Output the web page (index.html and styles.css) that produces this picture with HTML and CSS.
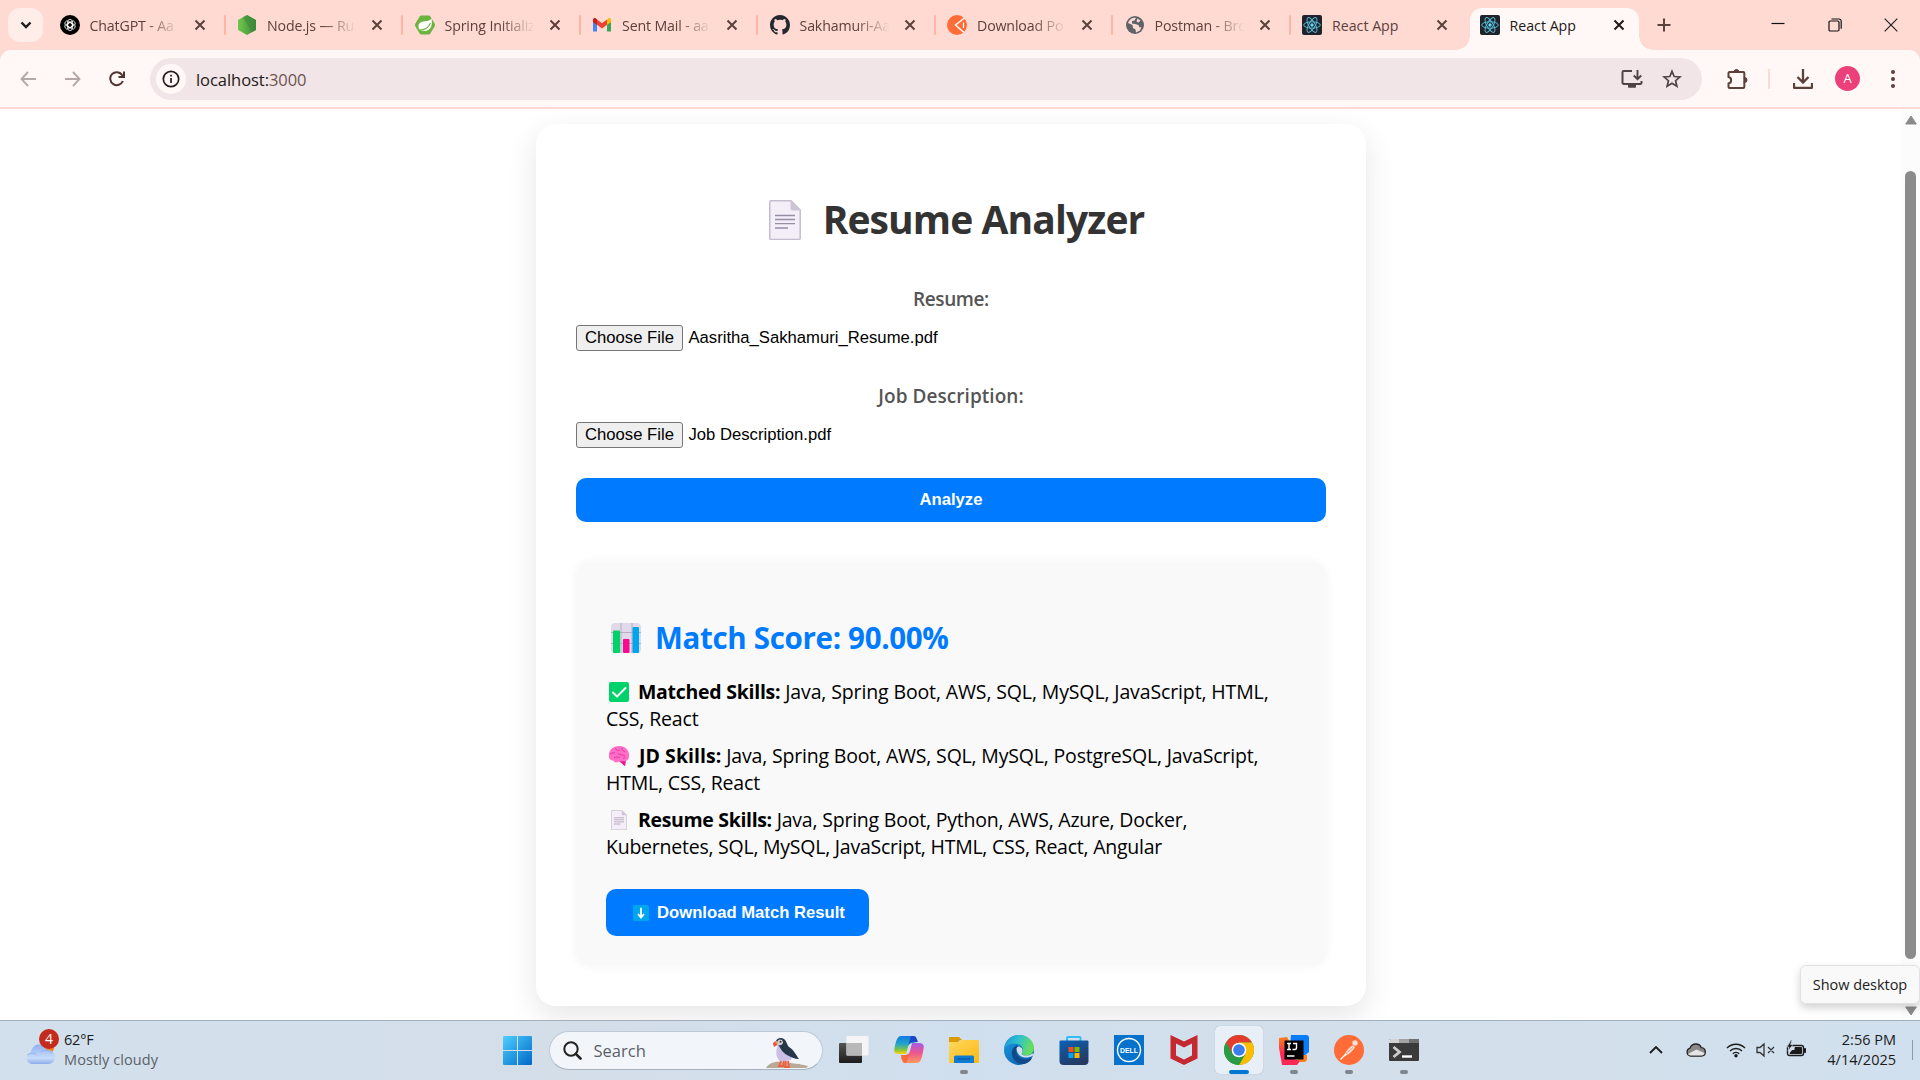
FILE: index.html
```html
<!DOCTYPE html>
<html lang="en">
<head>
<meta charset="utf-8">
<title>React App</title>
<link rel="stylesheet" href="styles.css">
</head>
<body>
<svg class="defs" width="0" height="0" aria-hidden="true">
  <defs>
    <symbol id="x" viewBox="0 0 12 12"><path d="M1.500 1.500l9 9M10.500 1.500l-9 9" stroke="currentColor" stroke-width="2" fill="none"/></symbol>
    <symbol id="react" viewBox="0 0 20 20"><rect width="20" height="20" rx="2" fill="#20232a"/><g fill="none" stroke="#53b9d6" stroke-width="1"><ellipse cx="10" cy="10" rx="8.3" ry="3.2"/><ellipse cx="10" cy="10" rx="8.3" ry="3.2" transform="rotate(60 10 10)"/><ellipse cx="10" cy="10" rx="8.3" ry="3.2" transform="rotate(120 10 10)"/></g><circle cx="10" cy="10" r="1.7" fill="#61dafb"/></symbol>
    <symbol id="page" viewBox="0 0 32 40"><path d="M2 .8h20l9.200 9.200v28a1.500 1.500 0 0 1-1.500 1.500H2A1.200 1.200 0 0 1 .8 38V2A1.200 1.200 0 0 1 2 .8z" fill="#f3eef8" stroke="#c5bdcf" stroke-width="1.500"/><path d="M21.500 1v7.500a2 2 0 0 0 2 2H31z" fill="#cdc4d6"/><path d="M6 15.500h20M6 19.500h20M6 23.700h20M6 28h13" stroke="#998da6" stroke-width="1.300"/></symbol>
    <linearGradient id="node" x2="1"><stop offset=".1" stop-color="#6cc24a"/><stop offset="1" stop-color="#3c873a"/></linearGradient>
    <linearGradient id="win" x2="1" y2="1"><stop stop-color="#4fd0ff"/><stop offset="1" stop-color="#0067c8"/></linearGradient>
    <linearGradient id="cloud" y2="1" x2="0"><stop stop-color="#8eb0f0"/><stop offset=".7" stop-color="#c9dcfa"/><stop offset="1" stop-color="#8cacec"/></linearGradient>
    <linearGradient id="dark" y2="1" x2="0"><stop stop-color="#555"/><stop offset="1" stop-color="#1c1c1c"/></linearGradient>
    <linearGradient id="copA" x2="0" y2="1"><stop stop-color="#1478e8"/><stop offset=".45" stop-color="#22a6c8"/><stop offset=".75" stop-color="#7cc34a"/><stop offset="1" stop-color="#ffd400"/></linearGradient>
    <linearGradient id="copB" x2="0" y2="1"><stop stop-color="#a55be8"/><stop offset=".5" stop-color="#ee5590"/><stop offset="1" stop-color="#ff9a5c"/></linearGradient>
    <linearGradient id="fold" x2="1" y2="1"><stop stop-color="#ffd75e"/><stop offset="1" stop-color="#fdb913"/></linearGradient>
    <linearGradient id="edgeA" x2="1" y2=".3"><stop stop-color="#1c8ee0"/><stop offset=".5" stop-color="#2ec1cf"/><stop offset="1" stop-color="#67de5b"/></linearGradient>
    <linearGradient id="edgeB" x2="1" y2="1"><stop stop-color="#1b9de2"/><stop offset="1" stop-color="#0c54a8"/></linearGradient>
    <linearGradient id="store" x2=".5" y2="1"><stop stop-color="#0a62b8"/><stop offset="1" stop-color="#243a63"/></linearGradient>
    <linearGradient id="ijA" x2="0" y2="1"><stop stop-color="#fc801d"/><stop offset=".6" stop-color="#fe2857"/></linearGradient>
  </defs>
</svg>

<div class="screen">
  <header class="tabstrip">
    <button class="tab-search"><svg width="12" height="8" viewBox="0 0 12 8"><path d="M1.500 1.500L6 6l4.500-4.500" fill="none" stroke="#1d1b1b" stroke-width="2.400"/></svg></button>
    <div class="tabs">
      <div class="tab"><svg class="fav" viewBox="0 0 20 20"><circle cx="10" cy="10" r="10" fill="#000"/><g fill="none" stroke="#fff" stroke-width=".8"><rect x="7.600" y="4.400" width="4.800" height="8.200" rx="2.400"/><rect x="7.600" y="4.400" width="4.800" height="8.200" rx="2.400" transform="rotate(60 10 10)"/><rect x="7.600" y="4.400" width="4.800" height="8.200" rx="2.400" transform="rotate(120 10 10)"/><rect x="7.600" y="4.400" width="4.800" height="8.200" rx="2.400" transform="rotate(180 10 10)"/><rect x="7.600" y="4.400" width="4.800" height="8.200" rx="2.400" transform="rotate(240 10 10)"/><rect x="7.600" y="4.400" width="4.800" height="8.200" rx="2.400" transform="rotate(300 10 10)"/></g></svg><span class="name">ChatGPT - Aa</span><svg class="close"><use href="#x"/></svg></div>
      <div class="tab"><svg class="fav" viewBox="0 0 20 20"><path d="M10 0l9 5v10l-9 5-9-5V5z" fill="url(#node)"/><path d="M10 0l9 5v10l-4 2.200L6 2.200z" fill="#3c873a" opacity=".55"/></svg><span class="name">Node.js — Ru</span><svg class="close"><use href="#x"/></svg></div>
      <div class="tab"><svg class="fav" viewBox="0 0 20 20"><path d="M5.500 1h9L20 10l-5.500 9h-9L0 10z" fill="#6db33f" stroke="#6db33f" stroke-linejoin="round"/><path d="M16.500 3.500c.9 5 .7 12.500-7.500 12.500-2 0-4.200-.8-5-2C2 8 6 6.500 10 6.300c3-.2 5-1 6.500-2.800z" fill="#fff"/><path d="M4.500 15c5 0 9-2 11-7" stroke="#6db33f" fill="none" stroke-width="1.100"/></svg><span class="name">Spring Initializ</span><svg class="close"><use href="#x"/></svg></div>
      <div class="tab"><svg class="fav" viewBox="0 0 20 20"><path d="M1 5v11.500h4V8z" fill="#4285f4"/><path d="M15 8v8.500h4V5z" fill="#34a853"/><path d="M15 5v5l4-3V4.500c0-1.500-2-2-3-1.200z" fill="#fbbc04"/><path d="M5 4.500l5 3.800 5-3.800v5.200l-5 3.800-5-3.800z" fill="#ea4335"/><path d="M1 4.500V7l4 3V4.200L4 3.400C3 2.600 1 3 1 4.500z" fill="#c5221f"/></svg><span class="name">Sent Mail - aa</span><svg class="close"><use href="#x"/></svg></div>
      <div class="tab"><svg class="fav" viewBox="0 0 16 16"><path fill="#24292f" d="M8 0C3.580 0 0 3.580 0 8c0 3.540 2.290 6.530 5.470 7.590.4.070.55-.17.55-.38 0-.19-.01-.82-.01-1.490-2.010.37-2.530-.49-2.690-.94-.09-.23-.48-.94-.82-1.130-.28-.15-.68-.52-.01-.53.63-.01 1.080.58 1.230.82.72 1.210 1.870.87 2.330.66.07-.52.28-.87.51-1.070-1.780-.2-3.640-.89-3.640-3.950 0-.87.31-1.590.82-2.150-.08-.2-.36-1.020.08-2.120 0 0 .67-.21 2.200.82A7.600 7.600 0 0 1 8 3.860c.68 0 1.360.09 2 .27 1.530-1.040 2.200-.82 2.200-.82.44 1.100.16 1.920.08 2.120.51.56.82 1.270.82 2.150 0 3.070-1.870 3.750-3.650 3.950.29.25.54.73.54 1.480 0 1.070-.01 1.930-.01 2.200 0 .21.15.46.55.38A8.010 8.010 0 0 0 16 8c0-4.420-3.580-8-8-8z"/></svg><span class="name">Sakhamuri-Aa</span><svg class="close"><use href="#x"/></svg></div>
      <div class="tab"><svg class="fav" viewBox="0 0 20 20"><circle cx="10" cy="10" r="10" fill="#ff6c37"/><path d="M17.500 3L8.500 10l8.500 7.500" fill="none" stroke="#fff" stroke-width="1.500"/><path d="M16.500 7.500v5.500" stroke="#fff" stroke-width="1.200"/></svg><span class="name">Download Po</span><svg class="close"><use href="#x"/></svg></div>
      <div class="tab"><svg class="fav" viewBox="0 0 20 20"><circle cx="10" cy="10" r="9" fill="#5f6368"/><path d="M3 8c2-5 5-5.500 8-5.300L9.500 5.500 7 6v2.500l3 .5 3.500 1 1 2.500 2-.5-1.500 3.500L11 17.500l-.5-3L8 13l-.5-3z" fill="#ffdad3"/><path d="M12.500 3.500l3 2-2 2-2-1z" fill="#ffdad3"/></svg><span class="name">Postman - Bro</span><svg class="close"><use href="#x"/></svg></div>
      <div class="tab"><svg class="fav"><use href="#react"/></svg><span class="name">React App</span><svg class="close"><use href="#x"/></svg></div>
      <div class="tab active"><svg class="fav"><use href="#react"/></svg><span class="name">React App</span><svg class="close"><use href="#x"/></svg></div>
    </div>
    <svg class="new-tab" viewBox="0 0 14 14"><path d="M7 .5v13M.5 7h13" stroke="#5b403b" stroke-width="2"/></svg>
    <div class="window-buttons">
      <svg width="14" height="14" viewBox="0 0 14 14"><path d="M.5 5.500h13" stroke="#111" stroke-width="1.200"/></svg>
      <svg width="14" height="14" viewBox="0 0 14 14"><rect x="1" y="3" width="10" height="10" rx="1.200" fill="none" stroke="#111" stroke-width="1.200"/><path d="M3.500 1h7.500a2.200 2.200 0 0 1 2.200 2.200v7.500" fill="none" stroke="#111" stroke-width="1.200"/></svg>
      <svg width="14" height="14" viewBox="0 0 14 14"><path d="M.7.700l12.600 12.600M13.300.700L.7 13.300" stroke="#222" stroke-width="1.200"/></svg>
    </div>
  </header>

  <div class="toolbar-wrap">
    <div class="toolbar">
      <div class="nav">
        <svg width="16" height="16" viewBox="0 0 16 16"><path d="M8 1L1.500 8 8 15M1.500 8H16" fill="none" stroke="#b5a9a7" stroke-width="1.900"/></svg>
        <svg width="16" height="16" viewBox="0 0 16 16"><path d="M8 1l6.500 7L8 15M14.500 8H0" fill="none" stroke="#b5a9a7" stroke-width="1.900"/></svg>
        <svg width="16" height="16" viewBox="0 0 16 16"><path d="M13.800 10A6.500 6.500 0 1 1 13 3.800L14.500 5.500M15 .5v5.500H9.500" fill="none" stroke="#4e3430" stroke-width="2"/></svg>
      </div>
      <div class="omnibox">
        <span class="site-info"><svg width="18" height="18" viewBox="0 0 18 18"><circle cx="9" cy="9" r="7.700" fill="none" stroke="#241c1c" stroke-width="1.700"/><path d="M9 8v5M9 4.800v1.700" stroke="#241c1c" stroke-width="1.700"/></svg></span>
        <span class="url">localhost:<i>3000</i></span>
        <span class="omni-actions">
          <svg width="22" height="20" viewBox="0 0 22 20"><path d="M11 2H2.700A1.200 1.200 0 0 0 1.500 3.200v10.600A1.200 1.200 0 0 0 2.700 15h16.600a1.200 1.200 0 0 0 1.200-1.200V12" fill="none" stroke="#4e4444" stroke-width="2"/><path d="M7 15.500h8V18a.8.800 0 0 1-.8.800H7.800A.8.800 0 0 1 7 18z" fill="#4e4444"/><path d="M16.500 1v9M12.800 6.500l3.700 3.700 3.700-3.700" fill="none" stroke="#4e4444" stroke-width="1.900"/></svg>
          <svg width="20" height="20" viewBox="0 0 20 20"><path d="M10 2.300l2.200 5.200 5.700.5-4.300 3.700 1.300 5.600-4.900-3-4.900 3 1.300-5.600L2.100 8l5.700-.5z" fill="none" stroke="#4e4444" stroke-width="1.700"/></svg>
        </span>
      </div>
      <div class="actions">
        <svg class="ext" width="22" height="22" viewBox="0 0 22 22"><path d="M3.500 4h13.800a1 1 0 0 1 1 1v14a1 1 0 0 1-1 1H3.500a1 1 0 0 1-1-1v-3.500c3.500-.5 3.500-6 0-6.500V5a1 1 0 0 1 1-1z" fill="none" stroke="#5b403b" stroke-width="2"/><path d="M8 4a2.500 2.500 0 0 1 5 0zM18.500 9.500a2.500 2.500 0 0 1 0 5z" fill="#5b403b" stroke="#5b403b"/></svg>
        <i class="divider"></i>
        <svg class="dl" width="20" height="20" viewBox="0 0 20 20"><path d="M10 0v13M4.500 8l5.500 5.500L15.500 8M1 14v4a1 1 0 0 0 1 1h16a1 1 0 0 0 1-1v-4" fill="none" stroke="#5b403b" stroke-width="2.300"/></svg>
        <span class="avatar">A</span>
        <svg width="4" height="18" viewBox="0 0 4 18" fill="#5b403b"><circle cx="2" cy="2" r="2"/><circle cx="2" cy="9" r="2"/><circle cx="2" cy="16" r="2"/></svg>
      </div>
    </div>
  </div>

  <main class="viewport">
    <section class="card">
      <h1><svg class="doc"><use href="#page"/></svg>Resume Analyzer</h1>
      <label>Resume:</label>
      <div class="file"><button>Choose File</button><span>Aasritha_Sakhamuri_Resume.pdf</span></div>
      <label class="job">Job Description:</label>
      <div class="file"><button>Choose File</button><span>Job Description.pdf</span></div>
      <button class="analyze">Analyze</button>
      <div class="result">
        <h2><svg viewBox="0 0 30 30"><rect width="30" height="30" rx="4" fill="#e1d8ea"/><path d="M10 0v30M21 0v30M0 9.500h30M0 20.500h30" stroke="#aea3ba" stroke-width=".8"/><rect x="2" y="7.500" width="7" height="22.500" rx="1" fill="#00d26a"/><rect x="12" y="16" width="6.500" height="14" rx="1" fill="#f70a8d"/><rect x="21.500" y="4" width="6.500" height="26" rx="1" fill="#00a6ed"/></svg>Match Score: 90.00%</h2>
        <p class="r1"><svg viewBox="0 0 20 20"><rect width="20" height="20" rx="2" fill="#00d26a"/><path d="M4 10.500l4 4L16.500 6" fill="none" stroke="#fff" stroke-width="1.900" stroke-linecap="round" stroke-linejoin="round"/></svg><b>Matched Skills:</b> Java, Spring Boot, AWS, SQL, MySQL, JavaScript, HTML,<br>CSS, React</p>
        <p class="r2"><svg class="brain" viewBox="0 0 22 20"><path d="M11 15l7-1-.8 6c-1.500 0-2-2-4-3z" fill="#e8188f"/><path d="M1 9C1 3 6 0 11.500 0S20 4 20.500 6c1.500 4 .5 8-2.500 9-3 1-6-.5-7 .5-2.500 1.500-5 1-5.500-1C2.500 14.500.5 13 1 9z" fill="#ff6dc6"/><path d="M2 8c2-1.500 3-1 5-1M8 2c-1 2 2 3 4 2M14 2c0 3 2 3 3 4M6 12c2-2 4 0 6-1M10 7c1 3 5 1 7 3M15 12c1 .5 2 0 3-1" fill="none" stroke="#e82b9b" stroke-width=".9"/></svg><b>JD Skills:</b> Java, Spring Boot, AWS, SQL, MySQL, PostgreSQL, JavaScript,<br>HTML, CSS, React</p>
        <p class="r3"><svg class="mini"><use href="#page"/></svg><b>Resume Skills:</b> Java, Spring Boot, Python, AWS, Azure, Docker,<br><span class="r4">Kubernetes, SQL, MySQL, JavaScript, HTML, CSS, React, Angular</span></p>
        <button class="download"><svg width="16" height="16" viewBox="0 0 16 16"><rect width="16" height="16" rx="1.500" fill="#00a6ed"/><path d="M8 2.800v9M5 9l3 3.500L11 9" fill="none" stroke="#fff" stroke-width="1.800"/></svg>Download Match Result</button>
      </div>
    </section>
    <aside class="scrollbar">
      <svg width="12" height="10" viewBox="0 0 12 10"><path d="M6 1l5.300 8H.7z" fill="#8b8b8b" stroke="#8b8b8b" stroke-linejoin="round"/></svg>
      <i class="thumb"></i>
      <svg width="12" height="10" viewBox="0 0 12 10"><path d="M6 9L.7 1h10.600z" fill="#8b8b8b" stroke="#8b8b8b" stroke-linejoin="round"/></svg>
    </aside>
    <div class="tooltip">Show desktop</div>
  </main>

  <footer class="taskbar">
    <div class="weather">
      <div class="weather-icon"><svg width="31" height="22" viewBox="0 0 31 22"><circle cx="23" cy="5" r="6" fill="#f58220"/><path d="M6.500 21a6 6 0 0 1-.8-11.500C7 4 10 1.500 14 1.500c3.500 0 6 2 7 5 5 0 9 3 9 7.500 0 4-3 7-7 7z" fill="url(#cloud)"/><path d="M2 12c4-3 8-2 10 .5M16 9c3-3 8-2 11 1" fill="none" stroke="#779bea" stroke-width=".8" opacity=".7"/></svg><span class="badge">4</span></div>
      <div class="weather-text"><b>62°F</b><span>Mostly cloudy</span></div>
    </div>
    <div class="center">
      <svg class="start" width="29" height="29" viewBox="0 0 29 29"><path d="M1 0h13v14H0V1a1 1 0 0 1 1-1zM15 0h13a1 1 0 0 1 1 1v13H15zM0 15h14v14H1a1 1 0 0 1-1-1zM15 15h14v13a1 1 0 0 1-1 1H15z" fill="url(#win)"/></svg>
      <div class="search">
        <svg width="19" height="19" viewBox="0 0 19 19"><circle cx="8" cy="8" r="6.700" fill="none" stroke="#222" stroke-width="2"/><path d="M12.800 12.800l4.700 4.700" stroke="#222" stroke-width="2.600" stroke-linecap="round"/></svg>
        <span>Search</span>
        <svg class="puffin" width="42" height="31" viewBox="0 0 42 31"><path d="M0 31c2-4 8-7 16-6 9 1 19 2 26 4-1 2-2 2-4 2z" fill="#b9aa98"/><path d="M12 8l6-6 4 6 5 7-2 8-10 2c-5-4-6-10-3-17z" fill="#cbbfe6"/><path d="M10 4c1-3 5-4 8-2 3 2 3 7 5 8 5 3 7 8 10 12-5 0-8-2-12-4-5-3-6-6-8-9z" fill="#27374a"/><path d="M11 6c0-4 5-5 6-1 .5 3-5 5-6 1z" fill="#d5d0dc"/><circle cx="14.500" cy="4.800" r="1" fill="#333"/><path d="M7 7c0-2 2-3 4-3l.5 4L8 10z" fill="#ef5350"/><path d="M9 4.800l2-.8.500 4z" fill="#f5a623"/><path d="M15 24l-2 5h4l1-5M20 24l-1 6h4l-1-6" fill="none" stroke="#f0603f" stroke-width="1.800"/></svg>
      </div>
      <div class="apps">
        <div class="app"><svg viewBox="0 0 30 30"><rect y="8" width="23" height="20" rx="1" fill="url(#dark)"/><rect x="7.500" y="1" width="22" height="19.500" rx="1" fill="#f5f5f5"/><rect x="7.500" y="8" width="15.500" height="12.500" fill="#b8b8b8"/></svg></div>
        <div class="app"><svg viewBox="0 0 30 30"><path d="M7 1h12c2 0 3 2 4 6l-4 1c-3 0-4 1-5 4l-2 7H5c-4 0-5.500-2-4.500-6C2 7 3 1 7 1z" fill="url(#copA)"/><path d="M17 1h3c2 0 3 3 4 6h-5c-2 0-4 1-5 4z" fill="#1b48c9"/><path d="M23 28H11c-2 0-3-2-4-6l4-2c3 0 4-1 5-4l2-8h7c4 0 5.500 2 4.500 6C28 22 27 28 23 28z" fill="url(#copB)"/><path d="M7 20h5c2 0 3-1 4-4l-3 11c-3 3-5-1-6-7z" fill="#fb6a3b"/></svg></div>
        <div class="app run"><svg viewBox="0 0 30 30"><path d="M1 2h9l3 3h-2l-2 2H0V3a1 1 0 0 1 1-1z" fill="#dc9a05"/><path d="M0 7h10l2-2h17a1 1 0 0 1 1 1v21a1 1 0 0 1-1 1H1a1 1 0 0 1-1-1z" fill="url(#fold)"/><path d="M5 28v-6a1.500 1.500 0 0 1 1.500-1.500h17A1.500 1.500 0 0 1 25 22v6z" fill="#0f7cd4"/><path d="M8.500 24h13" stroke="#064d91"/></svg></div>
        <div class="app"><svg viewBox="0 0 30 30"><circle cx="15" cy="15" r="15" fill="url(#edgeB)"/><path d="M0 14C1 5 7 0 15 0c9 0 15 6 15 13 0 5-4 7.500-8 7.500-3 0-5-1-4-2.500 2-3 1-8-5-9-6-1-11 1-13 5z" fill="url(#edgeA)"/><path d="M13 10c-4 2-6 6-5 10 1 5 5 9 10 9 4 0 8-2 10-6-6 3-13 1-15-4-1-2-1-4 1-6.500z" fill="#114a8b"/><path d="M12.500 14c0-2 2-3 3.500-2 3 1 3 4 2 6-1 1 0 2.500 4 2.500 2 0 4-.5 5.500-1.500 2-1 2.500-.5 1.500 1.500-6 4-15.500 2.500-16.500-6.500z" fill="#d3dfec"/></svg></div>
        <div class="app"><svg viewBox="0 0 30 30"><path d="M8 8V3a1 1 0 0 1 1-1h11.500a1 1 0 0 1 1 1v5" fill="none" stroke="#31bdf3" stroke-width="2"/><path d="M.5 6.500a1 1 0 0 1 1-1h27a1 1 0 0 1 1 1V26a4 4 0 0 1-4 4h-21a4 4 0 0 1-4-4z" fill="url(#store)"/><path d="M9.500 12h5v5h-5z" fill="#f25022"/><path d="M15.500 12h5v5h-5z" fill="#7fba00"/><path d="M9.500 18h5v5h-5z" fill="#00a4ef"/><path d="M15.500 18h5v5h-5z" fill="#ffb900"/></svg></div>
        <div class="app"><svg viewBox="0 0 30 30"><path d="M0 0h30v30H0z" fill="#0672cb"/><circle cx="15" cy="15" r="11.500" fill="none" stroke="#fff" stroke-width="1.400"/><text x="15" y="17.800" text-anchor="middle" textLength="18" lengthAdjust="spacingAndGlyphs" class="dell">DELL</text></svg></div>
        <div class="app"><svg viewBox="0 0 30 30"><path d="M1.500 0L15 6.500 28.500 0v23.500L15 30 1.500 23.500zM7 8.500v12L15 24.500l8-4v-12L15 12.500z" fill="#c3292f" fill-rule="evenodd"/></svg></div>
        <div class="app current"><svg viewBox="0 0 30 30"><circle cx="15" cy="15" r="15" fill="#34a853"/><path d="M15 0a15 15 0 0 1 13 7.500H15L8.500 18.800 2 7.500A15 15 0 0 1 15 0z" fill="#e33b2e"/><path d="M15 7.500h13A15 15 0 0 1 15 30l6.500-11.300z" fill="#fbbc04"/><path d="M2 7.500l6.500 11.300L15 22.500l6-3L15 30A15 15 0 0 1 2 7.500z" fill="#2b9a47"/><circle cx="15" cy="15" r="7.300" fill="#fff"/><circle cx="15" cy="15" r="5.800" fill="#3b7ded"/></svg></div>
        <div class="app run"><svg viewBox="0 0 30 30"><path d="M12 0h15a3 3 0 0 1 3 3v14l-6 5H10z" fill="#087cfa"/><path d="M20 20h8v5l-2 2h-8z" fill="#fc801d"/><path d="M0 3l8-1 4 7v14l9 3-3 4H3L0 13z" fill="url(#ijA)"/><path d="M5.500 5.500h19v19h-19z" fill="#000"/><path d="M8 8.500h4M10 8.500v6M8 14.500h4M14 8.500h3.500V13q0 1.500-1.700 1.500H13.500" fill="none" stroke="#fff" stroke-width="1.400"/><path d="M8 21h7.500" stroke="#fff" stroke-width="1.500"/></svg></div>
        <div class="app run"><svg viewBox="0 0 30 30"><circle cx="15" cy="15" r="15" fill="#ff6c37"/><circle cx="21" cy="8" r="2.700" fill="#ffe0d4"/><path d="M18.500 10.500c-3 1.500-6 5-7.500 8l-1.500 3 3.500-1.500c3-2 6.500-4.500 8-8z" fill="#ffe0d4"/><path d="M12 19l-5.500 5.500" fill="none" stroke="#fff" stroke-width="1.300"/><path d="M12 18.500l7-6" fill="none" stroke="#ff6c37" stroke-width=".7"/></svg></div>
        <div class="app run"><svg viewBox="0 0 30 30"><path d="M0 5a1 1 0 0 1 1-1h28a1 1 0 0 1 1 1v20a1 1 0 0 1-1 1H1a1 1 0 0 1-1-1z" fill="#3b3b3b"/><path d="M0 8V5a1 1 0 0 1 1-1h9v4z" fill="#d2d2d2"/><path d="M10 4h10v4H10z" fill="#a3a3a3"/><path d="M20 4h9a1 1 0 0 1 1 1v3H20z" fill="#707070"/><path d="M4.500 12l6 5-6 5" fill="none" stroke="#ccc" stroke-width="2.800"/><path d="M13 21.500h10" stroke="#fff" stroke-width="2.400"/></svg></div>
      </div>
    </div>
    <div class="tray">
      <svg width="14" height="8" viewBox="0 0 14 8"><path d="M1 7l6-6 6 6" fill="none" stroke="#1b1b1b" stroke-width="1.800"/></svg>
      <svg class="onedrive" width="20" height="14" viewBox="0 0 20 14"><path d="M4.500 13A4 4 0 0 1 4 5.200C5 2.500 7 1 9.800 1c3 0 4.700 1.500 5.500 3.700C18 5 19.300 7 19.300 9c0 2.500-1.800 4-4 4z" fill="#8a8a8a" stroke="#222" stroke-width="1.300"/><path d="M2 11l8.500-4.500 8 3.500c0 1.500-1.500 2.400-3 2.400H4.500c-1.300 0-2.200-.6-2.500-1.400z" fill="#e5e5e5"/></svg>
      <svg class="wifi" width="20" height="16" viewBox="0 0 20 16"><path d="M1 6a12.700 12.700 0 0 1 18 0M4 9a8.500 8.500 0 0 1 12 0M6.800 11.700a4.500 4.500 0 0 1 6.400 0" fill="none" stroke="#1b1b1b" stroke-width="1.400"/><circle cx="10" cy="13.800" r="1.700" fill="#1b1b1b"/></svg>
      <svg class="mute" width="19" height="16" viewBox="0 0 19 16"><path d="M1 5.500h3L8 2v12l-4-3.500H1zM12 5l6 6M18 5l-6 6" fill="none" stroke="#333" stroke-width="1.300"/></svg>
      <svg class="battery" width="20" height="18" viewBox="0 0 20 18"><rect x="1.500" y="5.500" width="16" height="10" rx="2" fill="none" stroke="#1b1b1b" stroke-width="1.400"/><path d="M9 7.500h6.500v6H4l2-3h3zM18.500 8.500h1v4h-1z" fill="#1b1b1b" stroke="#1b1b1b"/><path d="M5 0L1 7h2l-1 4 5-6.500H4.500L6 0z" fill="#1b1b1b" stroke="#d3dfec" stroke-width=".6"/></svg>
      <div class="clock"><span>2:56 PM</span><span>4/14/2025</span></div>
      <i class="show-desktop"></i>
    </div>
  </footer>
</div>
</body>
</html>
```
FILE: styles.css
```css
* { box-sizing: border-box; }
body { margin: 0; background: #fff; font-family: "Open Sans", "Noto Sans", sans-serif; }
button { font-family: "Liberation Sans", Arial, sans-serif; margin: 0; padding: 0; border: 0; }
svg { display: block; flex: none; }
.defs { position: absolute; }
.screen { width: 1920px; height: 1080px; overflow: hidden; display: flex; flex-direction: column; }

/* tab strip */
.tabstrip { height: 50px; background: #ffdad3; display: flex; align-items: flex-start; flex: none; padding-left: 8px; }
.tab-search { width: 35px; height: 34px; margin-top: 8px; border-radius: 12px; background: #ffedea; display: grid; place-items: center; }
.tabs { display: flex; margin-left: 4px; height: 50px; }
.tab { width: 177.500px; height: 50px; flex: none; display: flex; align-items: center; padding-left: 12.500px; position: relative; color: #5b403b; }
.tab + .tab:not(.active)::before { content: ""; width: 2px; height: 20px; border-radius: 1px; background: #ffb4a6; position: absolute; left: -1px; top: 15px; }
.fav { width: 20px; height: 20px; }
.name { font-size: 14.200px; letter-spacing: -.15px; line-height: 20px; width: 92px; margin-left: 10px; padding-top: 1px; white-space: nowrap; -webkit-mask-image: linear-gradient(90deg, #000 60%, transparent 97%); mask-image: linear-gradient(90deg, #000 60%, transparent 97%); }
.tab:nth-last-child(-n+2) .name { -webkit-mask-image: none; mask-image: none; letter-spacing: 0; }
.close { width: 12px; height: 12px; margin-left: 12px; }
.tab.active { width: 169px; height: 42px; margin: 8px 0 0 2.500px; padding-left: 10px; padding-bottom: 8px; border-radius: 12px 12px 0 0; background: #fff8f6; color: #231918; }
.tab.active .close { margin-left: 11px; }
.tab.active::before, .tab.active::after { content: ""; position: absolute; bottom: 0; width: 14px; height: 14px; }
.tab.active::before { left: -14px; background: radial-gradient(circle at 0 0, transparent 13.500px, #fff8f6 14px); }
.tab.active::after { right: -14px; background: radial-gradient(circle at 100% 0, transparent 13.500px, #fff8f6 14px); }
.new-tab { width: 14px; height: 14px; margin: 18px 0 0 18px; }
.window-buttons { display: flex; gap: 42.500px; margin: 17.500px 22px 0 auto; }

/* toolbar */
.toolbar-wrap { background: #ffdad3; height: 59px; flex: none; padding-bottom: 2px; }
.toolbar { height: 57px; background: #fff8f6; border-radius: 11px 11px 0 0; display: flex; align-items: center; padding-left: 20px; }
.nav { display: flex; gap: 28.500px; width: 130px; }
.omnibox { width: 1552px; height: 42px; border-radius: 21px; background: #f2e5e7; display: flex; align-items: center; padding: 0 20px 0 6px; margin-top: 1px; }
.site-info { width: 30px; height: 30px; border-radius: 50%; background: #fff8f6; display: grid; place-items: center; }
.url { font-size: 16.500px; letter-spacing: -.05px; margin-left: 10px; color: #231918; }
.url i { font-style: normal; color: #6b5450; }
.omni-actions { display: flex; gap: 19px; margin-left: auto; align-items: center; }
.actions { display: flex; align-items: center; margin-left: 23.500px; flex: 1; }
.divider { width: 2px; height: 20px; background: #ffdad3; margin-left: 20px; }
.dl { margin-left: 23px; }
.avatar { width: 25px; height: 25px; border-radius: 50%; background: #ec407a; color: #fff; font-size: 13px; line-height: 25px; text-align: center; margin: 0 31px 0 22.500px; }

/* page */
.viewport { flex: 1; position: relative; display: flex; justify-content: flex-end; align-items: flex-start; background: #fff; min-height: 0; overflow: hidden; }
.card { width: 830px; height: 882px; margin: 15px 535px 0 0; padding: 68px 40px 0; border-radius: 20px; background: #fff; box-shadow: 0 10px 30px rgba(0, 0, 0, .1); display: flex; flex-direction: column; }
h1 { margin: 0; font-size: 39px; line-height: 54px; letter-spacing: -.9px; color: #333; display: flex; justify-content: center; }
.doc { width: 32px; height: 40px; margin: 8px 22px 0 11px; }
label { font-size: 19px; font-weight: 600; line-height: 26px; color: #555; text-align: center; letter-spacing: -.4px; margin: 40px 0 13px; }
label.job { letter-spacing: .05px; margin-top: 32px; }
.file { display: flex; height: 26px; align-items: center; font: 16.670px/19px "Liberation Sans", Arial, sans-serif; color: #000; gap: 5.500px; }
.file button { width: 107px; height: 26px; border: 1px solid #767676; border-radius: 3px; background: #efefef; font-size: 16.670px; line-height: 22px; }
.file span { margin-top: -1px; }
.analyze { margin-top: 30px; height: 44px; border-radius: 10px; background: #007bff; color: #fff; font-size: 16.670px; font-weight: 700; flex: none; }
.result { margin-top: 40px; height: 404px; padding: 56px 30px 0; border-radius: 15px; background: #f9f9f9; box-shadow: 0 0 10px rgba(0, 0, 0, .05); color: #000; }
h2 { margin: 0 0 20px; font-size: 29.500px; line-height: 40px; letter-spacing: -.32px; color: #007bff; display: flex; }
h2 svg { width: 30px; height: 30px; margin: 5px 14px 0 5px; }
.result p { margin: 0 0 10px; font-size: 19.500px; line-height: 27px; letter-spacing: -.13px; white-space: nowrap; }
.result p svg { display: inline-block; width: 20px; height: 20px; margin: 0 9.500px 0 2.500px; vertical-align: -3px; }
.result p svg.brain { width: 22px; margin: 0 9px 0 2px; }
.result p svg.mini { width: 16px; margin: 0 11.500px 0 4.500px; }
.r1 b { letter-spacing: -.27px; }
.r2 b { letter-spacing: .05px; }
.result .r2 { letter-spacing: -.18px; }
.result .r3 { letter-spacing: -.21px; }
.r3 b { letter-spacing: -.34px; }
.r4 { letter-spacing: -.24px; }
.download { margin-top: 29px; width: 263px; height: 47px; border-radius: 10px; background: #007bff; color: #fff; font-size: 16.670px; font-weight: 700; display: flex; align-items: center; padding-left: 27px; gap: 8px; white-space: nowrap; }
.scrollbar { width: 19px; height: 911px; background: #fcfcfc; display: flex; flex-direction: column; align-items: center; padding: 6px 0 4px; }
.thumb { width: 11px; height: 788px; border-radius: 6px; background: #8b8b8b; margin: 46px 0 47px; }
.tooltip { position: absolute; right: 0; top: 856px; width: 120px; height: 39px; border-radius: 6px; background: #f9f9f9; border: 1px solid #e2e2e2; box-shadow: 0 4px 8px rgba(0, 0, 0, .18); font-size: 14.500px; line-height: 37px; text-align: center; color: #1b1b1b; letter-spacing: -.05px; }

/* taskbar */
.taskbar { height: 60px; flex: none; border-top: 1px solid #a4afbd; background: linear-gradient(90deg, #d2e0ed, #d4dee9 30%, #d0dfee 50%, #d3dfea 70%, #d1e0ee); display: grid; grid-template-columns: 503px 1fr auto; align-items: center; padding-bottom: 1px; }
.weather { display: flex; padding-left: 25px; }
.weather-icon { position: relative; padding-top: 12px; width: 39px; }
.badge { position: absolute; left: 14px; top: -2px; width: 20px; height: 20px; border-radius: 50%; background: #c42b1c; color: #fff; font-size: 14px; line-height: 20px; text-align: center; }
.weather-text { display: flex; flex-direction: column; font-size: 14.500px; line-height: 20px; color: #5b6167; letter-spacing: .1px; margin-top: -1px; }
.weather-text b { font-weight: 400; color: #1b1b1b; letter-spacing: -.2px; }
.center { display: flex; align-items: center; }
.search { width: 274px; height: 39px; border-radius: 20px; margin-left: 16.500px; background: #f2f6fb; border: 1px solid #bccad8; border-bottom-color: #a3b1be; display: flex; align-items: center; padding: 0 14px 0 13px; font-size: 16.500px; color: #5c6066; }
.search span { margin-left: 12px; }
.puffin { margin-left: auto; margin-top: 4px; }
.apps { display: flex; margin-left: 3.500px; }
.app { width: 55px; height: 48px; flex: none; display: grid; place-items: center; position: relative; }
.app svg { width: 30px; height: 30px; }
.run::after, .current::after { content: ""; position: absolute; bottom: 0; left: 23.500px; width: 8px; height: 4px; border-radius: 2px; background: #7e858d; }
.current { width: 48px; margin: 0 3.500px; border-radius: 5px; background: #e8eff7; box-shadow: 0 0 1px #98a5b3; }
.current::after { width: 20px; left: 14px; background: #0078d4; }
.dell { font: 700 7px "Liberation Sans", Arial, sans-serif; fill: #fff; }
.tray { display: flex; align-items: center; padding-right: 7px; color: #1b1b1b; }
.onedrive { margin-left: 23px; }
.wifi { margin-left: 20px; }
.mute { margin-left: 10px; }
.battery { margin-left: 11px; margin-top: -3px; }
.clock { width: 90px; display: flex; flex-direction: column; text-align: right; font-size: 14.500px; line-height: 20px; margin-top: -1px; }
.show-desktop { width: 1px; height: 20px; background: #8e99a5; margin-left: 16px; }
```
